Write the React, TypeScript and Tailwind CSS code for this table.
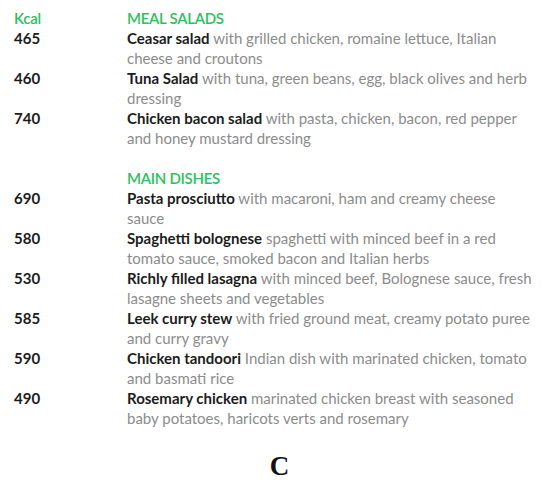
const SALADS = [
  {
    kcal: "465",
    name: "Ceasar salad",
    lines: ["with grilled chicken, romaine lettuce, Italian", "cheese and croutons"],
  },
  {
    kcal: "460",
    name: "Tuna Salad",
    lines: ["with tuna, green beans, egg, black olives and herb", "dressing"],
  },
  {
    kcal: "740",
    name: "Chicken bacon salad",
    lines: ["with pasta, chicken, bacon, red pepper", "and honey mustard dressing"],
  },
];

const MAINS = [
  {
    kcal: "690",
    name: "Pasta prosciutto",
    lines: ["with macaroni, ham and creamy cheese", "sauce"],
  },
  {
    kcal: "580",
    name: "Spaghetti bolognese",
    lines: ["spaghetti with minced beef in a red", "tomato sauce, smoked bacon and Italian herbs"],
  },
  {
    kcal: "530",
    name: "Richly filled lasagna",
    lines: ["with minced beef, Bolognese sauce, fresh", "lasagne sheets and vegetables"],
  },
  {
    kcal: "585",
    name: "Leek curry stew",
    lines: ["with fried ground meat, creamy potato puree", "and curry gravy"],
  },
  {
    kcal: "590",
    name: "Chicken tandoori",
    lines: ["Indian dish with marinated chicken, tomato", "and basmati rice"],
  },
  {
    kcal: "490",
    name: "Rosemary chicken",
    lines: ["marinated chicken breast with seasoned", "baby potatoes, haricots verts and rosemary"],
  },
];

type Dish = { kcal: string; name: string; lines: string[] };

function Row({ dish }: { dish: Dish }) {
  return (
    <div className="flex">
      <div className="w-[113px] shrink-0 font-bold text-[#1c1c1c]">{dish.kcal}</div>
      <div className="whitespace-nowrap text-[#8c8c8c]">
        <span className="font-bold text-[#1c1c1c]">{dish.name}</span> {dish.lines[0]}
        <br />
        {dish.lines[1]}
      </div>
    </div>
  );
}

export default function App() {
  return (
    <div className="h-[487px] w-[550px] bg-white pl-[14px] pt-[8px] text-[15px] leading-[20px] font-['Lato',sans-serif]">
      <div className="flex font-semibold tracking-[-0.3px] text-[#2ec05c]">
        <div className="w-[113px] shrink-0">Kcal</div>
        <div>MEAL SALADS</div>
      </div>
      {SALADS.map((d) => (
        <Row key={d.kcal} dish={d} />
      ))}

      <div className="mt-[20px] flex font-semibold tracking-[-0.3px] text-[#2ec05c]">
        <div className="w-[113px] shrink-0" />
        <div>MAIN DISHES</div>
      </div>
      {MAINS.map((d) => (
        <Row key={d.kcal} dish={d} />
      ))}

      <div className="mt-[25px] pl-[9px] pr-[14px] text-center font-['Liberation_Serif',serif] text-[27px] font-bold leading-none text-[#111]">
        C
      </div>
    </div>
  );
}
